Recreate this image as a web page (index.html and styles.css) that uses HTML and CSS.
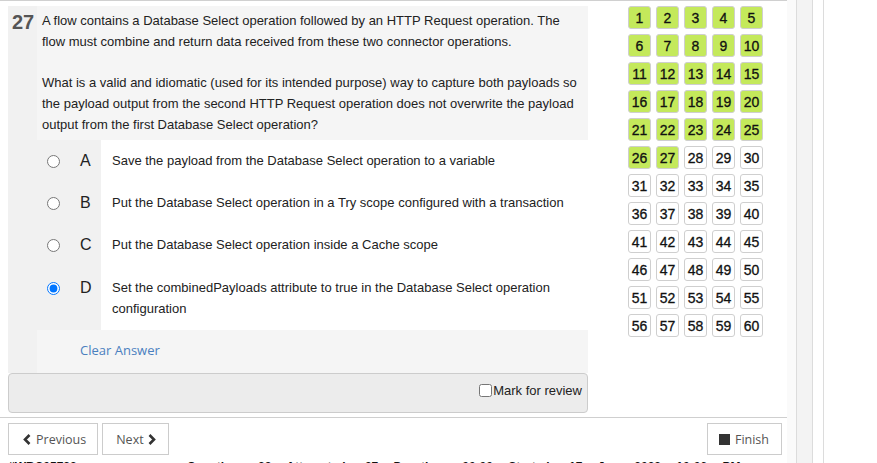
FILE: index.html
```html
<!DOCTYPE html>
<html>
<head>
<meta charset="utf-8">
<link rel="stylesheet" href="styles.css">
</head>
<body>
<div class="page">
  <div class="main">
    <div class="content">
      <div class="left">
        <div class="qpanel">
          <div class="qhead">
            <div class="qnum">27</div>
            <div class="qtext">A flow contains a Database Select operation followed by an HTTP Request operation. The flow must combine and return data received from these two connector operations.<br><br>What is a valid and idiomatic (used for its intended purpose) way to capture both payloads so the payload output from the second HTTP Request operation does not overwrite the payload output from the first Database Select operation?</div>
          </div>
          <div class="options">
            <label class="opt">
              <span class="opt-mark"><input type="radio" name="ans"><span class="letter">A</span></span>
              <span class="opt-text">Save the payload from the Database Select operation to a variable</span>
            </label>
            <label class="opt">
              <span class="opt-mark"><input type="radio" name="ans"><span class="letter">B</span></span>
              <span class="opt-text">Put the Database Select operation in a Try scope configured with a transaction</span>
            </label>
            <label class="opt">
              <span class="opt-mark"><input type="radio" name="ans"><span class="letter">C</span></span>
              <span class="opt-text">Put the Database Select operation inside a Cache scope</span>
            </label>
            <label class="opt">
              <span class="opt-mark"><input type="radio" name="ans" checked><span class="letter">D</span></span>
              <span class="opt-text">Set the combinedPayloads attribute to true in the Database Select operation configuration</span>
            </label>
          </div>
          <div class="clear"><a class="clear-link">Clear Answer</a></div>
        </div>
        <div class="markbar"><label class="mark"><input type="checkbox">Mark for review</label></div>
      </div>
      <div class="grid">
        <span class="cell done">1</span><span class="cell done">2</span><span class="cell done">3</span><span class="cell done">4</span><span class="cell done">5</span>
        <span class="cell done">6</span><span class="cell done">7</span><span class="cell done">8</span><span class="cell done">9</span><span class="cell done">10</span>
        <span class="cell done">11</span><span class="cell done">12</span><span class="cell done">13</span><span class="cell done">14</span><span class="cell done">15</span>
        <span class="cell done">16</span><span class="cell done">17</span><span class="cell done">18</span><span class="cell done">19</span><span class="cell done">20</span>
        <span class="cell done">21</span><span class="cell done">22</span><span class="cell done">23</span><span class="cell done">24</span><span class="cell done">25</span>
        <span class="cell done">26</span><span class="cell done">27</span><span class="cell">28</span><span class="cell">29</span><span class="cell">30</span>
        <span class="cell">31</span><span class="cell">32</span><span class="cell">33</span><span class="cell">34</span><span class="cell">35</span>
        <span class="cell">36</span><span class="cell">37</span><span class="cell">38</span><span class="cell">39</span><span class="cell">40</span>
        <span class="cell">41</span><span class="cell">42</span><span class="cell">43</span><span class="cell">44</span><span class="cell">45</span>
        <span class="cell">46</span><span class="cell">47</span><span class="cell">48</span><span class="cell">49</span><span class="cell">50</span>
        <span class="cell">51</span><span class="cell">52</span><span class="cell">53</span><span class="cell">54</span><span class="cell">55</span>
        <span class="cell">56</span><span class="cell">57</span><span class="cell">58</span><span class="cell">59</span><span class="cell">60</span>
      </div>
    </div>
    <div class="rule"></div>
    <div class="nav">
      <div class="nav-left">
        <button class="btn"><svg class="chev" width="8" height="11" viewBox="0 0 8 11"><polyline points="6.5,1 2,5.5 6.5,10" fill="none" stroke="#333" stroke-width="2.6"/></svg>Previous</button>
        <button class="btn btn-next">Next<svg class="chev" width="8" height="11" viewBox="0 0 8 11"><polyline points="1.5,1 6,5.5 1.5,10" fill="none" stroke="#333" stroke-width="2.6"/></svg></button>
      </div>
      <button class="btn btn-finish"><span class="stop"></span>Finish</button>
    </div>
    <div class="footer">
      <span class="f-id">#WBC05783</span>
      <span class="f-info">Question: 28 Attempted: 27 Duration: 00:00 Started: 17 Jun 2023 10:06 PM</span>
    </div>
  </div>
  <div class="scroll">
    <div class="s1"></div>
    <div class="s2"></div>
    <div class="s3"></div>
    <div class="s4"></div>
  </div>
</div>
</body>
</html>
```
FILE: styles.css
```css
html, body {
  margin: 0;
  padding: 0;
  background: #fff;
}
body {
  font-family: "Liberation Sans", Arial, sans-serif;
  font-size: 13px;
  color: #222;
  width: 877px;
  height: 463px;
  overflow: hidden;
}
.page {
  display: flex;
  height: 463px;
}
.main {
  width: 787px;
  flex: none;
  border-top: 1px solid #d0d0d0;
}
.content {
  display: flex;
  align-items: flex-start;
  padding: 5px 0 0 8px;
}
.left {
  width: 580px;
  flex: none;
}
.qpanel {
  background: #f1f1f1;
}
.qhead {
  display: flex;
}
.qnum {
  width: 29px;
  flex: none;
  box-sizing: border-box;
  padding: 4px 0 0 4px;
  font-weight: bold;
  font-size: 20px;
  line-height: 24px;
  color: #555;
}
.qtext {
  flex: 1;
  background: #f5f5f5;
  padding: 5px 8px 4px 5px;
  line-height: 20.8px;
  color: #222;
}
.options {
  display: flex;
  flex-direction: column;
}
.opt {
  display: flex;
}
.opt-mark {
  width: 93px;
  flex: none;
  box-sizing: border-box;
  padding: 10.8px 0 0 39px;
  display: flex;
  align-items: flex-start;
}
.opt-mark input {
  margin: 4px 0 0 0;
  width: 13px;
  height: 13px;
}
.letter {
  margin-left: 20px;
  font-size: 16px;
  line-height: 20.8px;
  color: #222;
}
.opt-text {
  flex: 1;
  background: #fff;
  padding: 10.8px 10px 10.8px 11px;
  line-height: 20.8px;
  color: #222;
}
.clear {
  margin-left: 29px;
  background: #f5f5f5;
  padding: 10px 0 11.2px 43px;
  line-height: 20.8px;
}
.clear-link {
  font-family: "Open Sans", sans-serif;
  font-size: 13px;
  color: #4a80bf;
}
.markbar {
  background: #ececec;
  border: 1px solid #ccc;
  border-radius: 4px;
  box-sizing: content-box;
  display: flex;
  justify-content: flex-end;
  align-items: center;
  padding: 0 5px 5px 0;
  height: 33px;
}
.mark {
  display: flex;
  align-items: center;
  font-size: 13px;
  color: #222;
}
.mark input {
  margin: 0 1px 0 0;
  width: 13px;
  height: 13px;
}
.grid {
  margin-left: 40px;
  display: grid;
  grid-template-columns: repeat(5, 23px);
  grid-auto-rows: 23px;
  gap: 5px;
}
.cell {
  box-sizing: border-box;
  border: 1px solid #cfcfcf;
  border-radius: 3px;
  background: #fff;
  display: flex;
  align-items: center;
  justify-content: center;
  font-size: 14px;
  color: #111;
  -webkit-text-stroke: 0.3px #111;
}
.cell.done {
  background: #c4e95b;
}
.rule {
  margin-top: 4px;
  border-top: 1px solid #cfcfcf;
}
.nav {
  display: flex;
  justify-content: space-between;
  padding: 5px 5px 0 8px;
}
.nav-left {
  display: flex;
  gap: 4px;
}
.btn {
  font-family: "Open Sans", sans-serif;
  font-size: 12.5px;
  color: #555;
  background: #fff;
  border: 1px solid #ccc;
  border-radius: 0;
  height: 32px;
  margin: 0;
  padding: 0 11px 0 14px;
  display: flex;
  align-items: center;
  gap: 5px;
}
.btn-next {
  padding: 0 12px 0 13px;
  gap: 4px;
}
.btn-finish {
  padding: 0 12px 0 11px;
  gap: 5px;
}
.stop {
  width: 11px;
  height: 11px;
  background: #333;
  display: inline-block;
}
.footer {
  display: flex;
  padding: 5px 0 0 8px;
  font-size: 12px;
  font-weight: bold;
  color: #111;
  white-space: nowrap;
}
.f-info {
  margin-left: 110px;
  word-spacing: 12px;
}
.scroll {
  flex: 1;
  display: flex;
  height: 463px;
}
.s1 {
  width: 9px;
  background: #fafafa;
  border-right: 1px solid #dcdcdc;
}
.s2 {
  width: 15px;
  background: #f3f3f3;
  border-right: 1px solid #dcdcdc;
}
.s3 {
  width: 10px;
  background: #fff;
  border-right: 1px solid #dcdcdc;
}
.s4 {
  flex: 1;
  background: #fff;
}
```
